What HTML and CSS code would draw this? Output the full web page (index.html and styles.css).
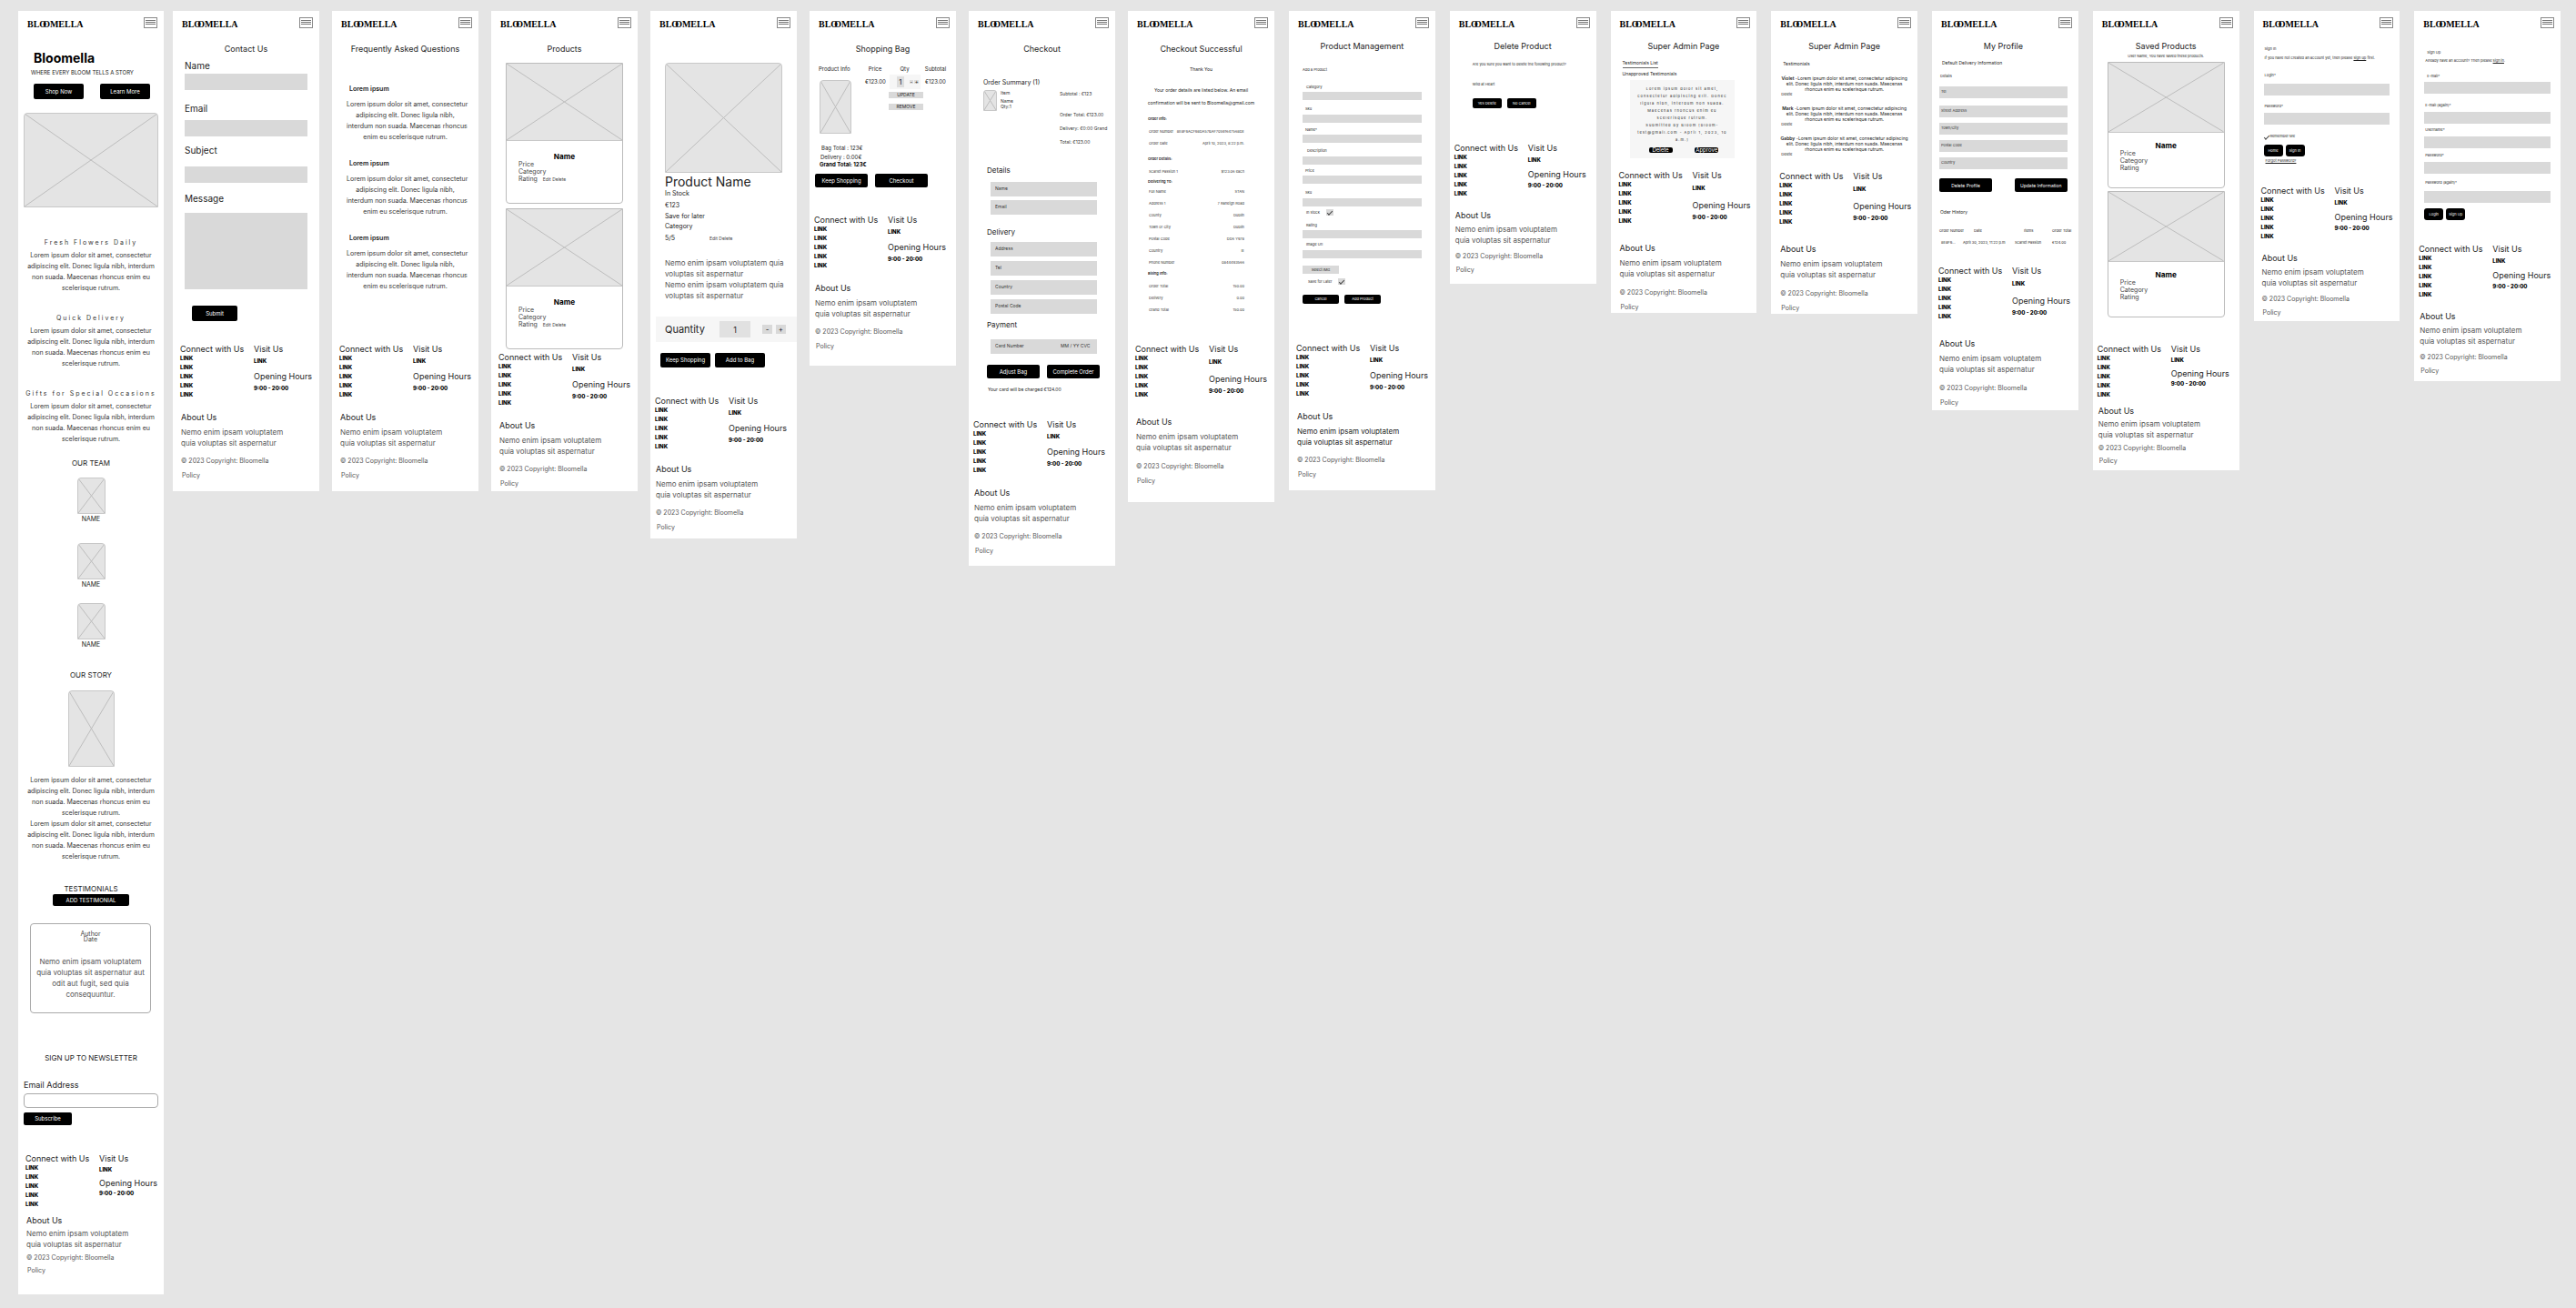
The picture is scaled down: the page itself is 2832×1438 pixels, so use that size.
FILE: index.html
```html
<!DOCTYPE html>
<html lang="en">
<head>
<meta charset="utf-8">
<meta name="viewport" content="width=device-width, initial-scale=1">
<title>Bloomella mobile wireframes</title>
<link rel="stylesheet" href="styles.css">
</head>
<body>
<svg class="defs" aria-hidden="true">
  <symbol id="menu" viewBox="0 0 13 10"><path d="M1 2.5h11M1 4.5h11M1 6.5h11" stroke="#777" stroke-width="1" fill="none"/></symbol>
  <symbol id="cross" viewBox="0 0 100 100" preserveAspectRatio="none"><path d="M0 0L100 100M100 0L0 100" stroke="#bdbdbd" stroke-width="1" vector-effect="non-scaling-stroke" fill="none"/></symbol>
</svg>

<div class="canvas">
<div class="group">

<article class="board home">
  <header class="top"><a class="logo" href="#">BLO<span>O</span>MELLA</a><button class="menu" aria-label="Menu"><svg><use href="#menu"/></svg></button></header>
  <main>
    <h1 class="brand mt-22 in-11">Bloomella</h1>
    <p class="t6 mt-4 in-8">WHERE EVERY BLOOM TELLS A STORY</p>
    <div class="btns hero-btns mt-8"><button class="btn">Shop Now</button><button class="btn">Learn More</button></div>
    <div class="ph round hero-img mt-15"><svg><use href="#cross"/></svg></div>
    <h3 class="spaced mt-34">Fresh Flowers Daily</h3>
    <p class="lorem mt-3">Lorem ipsum dolor sit amet, consectetur<br>adipiscing elit. Donec ligula nibh, interdum<br>non suada. Maecenas rhoncus enim eu<br>scelerisque rutrum.</p>
    <h3 class="spaced mt-22">Quick Delivery</h3>
    <p class="lorem mt-3">Lorem ipsum dolor sit amet, consectetur<br>adipiscing elit. Donec ligula nibh, interdum<br>non suada. Maecenas rhoncus enim eu<br>scelerisque rutrum.</p>
    <h3 class="spaced mt-22">Gifts for Special Occasions</h3>
    <p class="lorem mt-3">Lorem ipsum dolor sit amet, consectetur<br>adipiscing elit. Donec ligula nibh, interdum<br>non suada. Maecenas rhoncus enim eu<br>scelerisque rutrum.</p>
    <h2 class="t8 center mt-15">OUR TEAM</h2>
    <figure class="member mt-11"><div class="ph round"><svg><use href="#cross"/></svg></div><figcaption>NAME</figcaption></figure>
    <figure class="member mt-22"><div class="ph round"><svg><use href="#cross"/></svg></div><figcaption>NAME</figcaption></figure>
    <figure class="member mt-16"><div class="ph round"><svg><use href="#cross"/></svg></div><figcaption>NAME</figcaption></figure>
    <h2 class="t8 center mt-24">OUR STORY</h2>
    <div class="ph round story-img mt-12"><svg><use href="#cross"/></svg></div>
    <p class="lorem mt-9">Lorem ipsum dolor sit amet, consectetur<br>adipiscing elit. Donec ligula nibh, interdum<br>non suada. Maecenas rhoncus enim eu<br>scelerisque rutrum.<br>Lorem ipsum dolor sit amet, consectetur<br>adipiscing elit. Donec ligula nibh, interdum<br>non suada. Maecenas rhoncus enim eu<br>scelerisque rutrum.</p>
    <h2 class="t8 center mt-24">TESTIMONIALS</h2>
    <button class="btn add mt-1">ADD TESTIMONIAL</button>
    <blockquote class="quote mt-19"><p class="by">Author<br>Date</p><p class="copy mt-15">Nemo enim ipsam voluptatem<br>quia voluptas sit aspernatur aut<br>odit aut fugit, sed quia<br>consequuntur.</p></blockquote>
    <h2 class="t8 center mt-44">SIGN UP TO NEWSLETTER</h2>
    <label class="t9 mt-20" for="news">Email Address</label>
    <input class="outline mt-4" id="news" type="email">
    <button class="btn subscribe mt-5">Subscribe</button>
  </main>
  <footer class="foot tight">
    <div class="foot-cols">
      <div><h4>Connect with Us</h4><ul><li><a href="#">LINK</a></li><li><a href="#">LINK</a></li><li><a href="#">LINK</a></li><li><a href="#">LINK</a></li><li><a href="#">LINK</a></li></ul></div>
      <div><h4>Visit Us</h4><a class="visit" href="#">LINK</a><h4 class="opening">Opening Hours</h4><p class="hours">9:00 - 20:00</p></div>
    </div>
    <div class="about"><h4>About Us</h4><p class="copy">Nemo enim ipsam voluptatem<br>quia voluptas sit aspernatur</p><p class="legal">© 2023 Copyright: Bloomella</p><a class="policy" href="#">Policy</a></div>
  </footer>
</article>
</div>

<div class="group shop">

<article class="board contact">
  <header class="top"><a class="logo" href="#">BLO<span>O</span>MELLA</a><button class="menu" aria-label="Menu"><svg><use href="#menu"/></svg></button></header>
  <main>
    <h2 class="title mt-14">Contact Us</h2>
    <label class="t10 mt-6" for="c-name">Name</label><input class="bar h18 mt-3" id="c-name">
    <label class="t10 mt-14" for="c-mail">Email</label><input class="bar h18 mt-7" id="c-mail">
    <label class="t10 mt-9" for="c-subj">Subject</label><input class="bar h18 mt-12" id="c-subj">
    <label class="t10 mt-11" for="c-msg">Message</label><textarea class="bar mt-10" id="c-msg"></textarea>
    <button class="btn submit mt-18">Submit</button>
  </main>
  <footer class="foot">
    <div class="foot-cols">
      <div><h4>Connect with Us</h4><ul><li><a href="#">LINK</a></li><li><a href="#">LINK</a></li><li><a href="#">LINK</a></li><li><a href="#">LINK</a></li><li><a href="#">LINK</a></li></ul></div>
      <div><h4>Visit Us</h4><a class="visit" href="#">LINK</a><h4 class="opening">Opening Hours</h4><p class="hours">9:00 - 20:00</p></div>
    </div>
    <div class="about"><h4>About Us</h4><p class="copy">Nemo enim ipsam voluptatem<br>quia voluptas sit aspernatur</p><p class="legal">© 2023 Copyright: Bloomella</p><a class="policy" href="#">Policy</a></div>
  </footer>
</article>

<article class="board faq">
  <header class="top"><a class="logo" href="#">BLO<span>O</span>MELLA</a><button class="menu" aria-label="Menu"><svg><use href="#menu"/></svg></button></header>
  <main>
    <h2 class="title mt-14">Frequently Asked Questions</h2>
    <h3 class="q mt-34">Lorem ipsum</h3>
    <p class="lorem mt-7">Lorem ipsum dolor sit amet, consectetur<br>adipiscing elit. Donec ligula nibh,<br>interdum non suada. Maecenas rhoncus<br>enim eu scelerisque rutrum.</p>
    <h3 class="q mt-19">Lorem ipsum</h3>
    <p class="lorem mt-7">Lorem ipsum dolor sit amet, consectetur<br>adipiscing elit. Donec ligula nibh,<br>interdum non suada. Maecenas rhoncus<br>enim eu scelerisque rutrum.</p>
    <h3 class="q mt-19">Lorem ipsum</h3>
    <p class="lorem mt-7">Lorem ipsum dolor sit amet, consectetur<br>adipiscing elit. Donec ligula nibh,<br>interdum non suada. Maecenas rhoncus<br>enim eu scelerisque rutrum.</p>
  </main>
  <footer class="foot">
    <div class="foot-cols">
      <div><h4>Connect with Us</h4><ul><li><a href="#">LINK</a></li><li><a href="#">LINK</a></li><li><a href="#">LINK</a></li><li><a href="#">LINK</a></li><li><a href="#">LINK</a></li></ul></div>
      <div><h4>Visit Us</h4><a class="visit" href="#">LINK</a><h4 class="opening">Opening Hours</h4><p class="hours">9:00 - 20:00</p></div>
    </div>
    <div class="about"><h4>About Us</h4><p class="copy">Nemo enim ipsam voluptatem<br>quia voluptas sit aspernatur</p><p class="legal">© 2023 Copyright: Bloomella</p><a class="policy" href="#">Policy</a></div>
  </footer>
</article>

<article class="board products">
  <header class="top"><a class="logo" href="#">BLO<span>O</span>MELLA</a><button class="menu" aria-label="Menu"><svg><use href="#menu"/></svg></button></header>
  <main>
    <h2 class="title mt-14">Products</h2>
    <section class="card mt-9"><div class="ph"><svg><use href="#cross"/></svg></div><h3>Name</h3><p>Price</p><p>Category</p><p>Rating <span class="edit"><a href="#">Edit</a> <a href="#">Delete</a></span></p></section>
    <section class="card mt-5"><div class="ph"><svg><use href="#cross"/></svg></div><h3>Name</h3><p>Price</p><p>Category</p><p>Rating <span class="edit"><a href="#">Edit</a> <a href="#">Delete</a></span></p></section>
  </main>
  <footer class="foot">
    <div class="foot-cols">
      <div><h4>Connect with Us</h4><ul><li><a href="#">LINK</a></li><li><a href="#">LINK</a></li><li><a href="#">LINK</a></li><li><a href="#">LINK</a></li><li><a href="#">LINK</a></li></ul></div>
      <div><h4>Visit Us</h4><a class="visit" href="#">LINK</a><h4 class="opening">Opening Hours</h4><p class="hours">9:00 - 20:00</p></div>
    </div>
    <div class="about"><h4>About Us</h4><p class="copy">Nemo enim ipsam voluptatem<br>quia voluptas sit aspernatur</p><p class="legal">© 2023 Copyright: Bloomella</p><a class="policy" href="#">Policy</a></div>
  </footer>
</article>

<article class="board detail">
  <header class="top"><a class="logo" href="#">BLO<span>O</span>MELLA</a><button class="menu" aria-label="Menu"><svg><use href="#menu"/></svg></button></header>
  <main>
    <div class="ph round product-img mt-35"><svg><use href="#cross"/></svg></div>
    <h2 class="product-name mt-2">Product Name</h2>
    <p class="t7 mt-1">In Stock</p>
    <p class="t7 mt-5">€123</p>
    <a class="t7 mt-4" href="#">Save for later</a>
    <p class="t7 mt-3">Category</p>
    <p class="t7 rating mt-5">5/5 <span class="edit"><a href="#">Edit</a> <a href="#">Delete</a></span></p>
    <p class="copy mt-17">Nemo enim ipsam voluptatem quia<br>voluptas sit aspernatur<br>Nemo enim ipsam voluptatem quia<br>voluptas sit aspernatur</p>
    <div class="quantity"><label for="qty">Quantity</label><input id="qty" value="1"><button>-</button><button>+</button></div>
    <div class="btns detail-btns mt-12"><button class="btn">Keep Shopping</button><button class="btn">Add to Bag</button></div>
  </main>
  <footer class="foot">
    <div class="foot-cols">
      <div><h4>Connect with Us</h4><ul><li><a href="#">LINK</a></li><li><a href="#">LINK</a></li><li><a href="#">LINK</a></li><li><a href="#">LINK</a></li><li><a href="#">LINK</a></li></ul></div>
      <div><h4>Visit Us</h4><a class="visit" href="#">LINK</a><h4 class="opening">Opening Hours</h4><p class="hours">9:00 - 20:00</p></div>
    </div>
    <div class="about"><h4>About Us</h4><p class="copy">Nemo enim ipsam voluptatem<br>quia voluptas sit aspernatur</p><p class="legal">© 2023 Copyright: Bloomella</p><a class="policy" href="#">Policy</a></div>
  </footer>
</article>

<article class="board bag">
  <header class="top"><a class="logo" href="#">BLO<span>O</span>MELLA</a><button class="menu" aria-label="Menu"><svg><use href="#menu"/></svg></button></header>
  <main>
    <h2 class="title mt-14">Shopping Bag</h2>
    <table class="bag-table mt-12">
      <colgroup><col class="c-info"><col class="c-price"><col class="c-qty"><col></colgroup>
      <thead><tr><th>Product Info</th><th>Price</th><th>Qty</th><th>Subtotal</th></tr></thead>
      <tbody><tr>
        <td><div class="ph round"><svg><use href="#cross"/></svg></div></td>
        <td class="money">€123.00</td>
        <td><div class="stepper"><input value="1" aria-label="Quantity"><button>-</button><button>+</button></div><button class="chip mt-3">UPDATE</button><button class="chip mt-6">REMOVE</button></td>
        <td class="money">€123.00</td>
      </tr></tbody>
    </table>
    <p class="t6 in-3 mt-12">Bag Total : 123€</p>
    <p class="t6 in-2 mt-2">Delivery : 0:00€</p>
    <p class="t6 in-1 strong">Grand Total: 123€</p>
    <div class="btns bag-btns mt-6"><button class="btn">Keep Shopping</button><button class="btn">Checkout</button></div>
  </main>
  <footer class="foot">
    <div class="foot-cols">
      <div><h4>Connect with Us</h4><ul><li><a href="#">LINK</a></li><li><a href="#">LINK</a></li><li><a href="#">LINK</a></li><li><a href="#">LINK</a></li><li><a href="#">LINK</a></li></ul></div>
      <div><h4>Visit Us</h4><a class="visit" href="#">LINK</a><h4 class="opening">Opening Hours</h4><p class="hours">9:00 - 20:00</p></div>
    </div>
    <div class="about"><h4>About Us</h4><p class="copy">Nemo enim ipsam voluptatem<br>quia voluptas sit aspernatur</p><p class="legal">© 2023 Copyright: Bloomella</p><a class="policy" href="#">Policy</a></div>
  </footer>
</article>

<article class="board checkout">
  <header class="top"><a class="logo" href="#">BLO<span>O</span>MELLA</a><button class="menu" aria-label="Menu"><svg><use href="#menu"/></svg></button></header>
  <main>
    <h2 class="title mt-14">Checkout</h2>
    <h3 class="t7 mt-27">Order Summary (1)</h3>
    <div class="summary mt-4">
      <div class="ph round"><svg><use href="#cross"/></svg></div>
      <div class="item"><p>Item</p><p class="mt-3">Name</p><p>Qty:1</p></div>
      <div class="totals"><p>Subtotal : €123</p><p class="mt-17">Order Total: €123.00</p><p class="mt-9">Delivery: €0:00 Grand</p><p class="mt-9">Total: €123.00</p></div>
    </div>
    <h3 class="t8 in-4 mt-23">Details</h3>
    <input class="bar h16 mt-8" placeholder="Name" aria-label="Name"><input class="bar h16 mt-4" placeholder="Email" aria-label="Email">
    <h3 class="t8 in-4 mt-14">Delivery</h3>
    <input class="bar h16 mt-6" placeholder="Address" aria-label="Address"><input class="bar h16 mt-5" placeholder="Tel" aria-label="Tel"><input class="bar h16 mt-5" placeholder="Country" aria-label="Country"><input class="bar h16 mt-5" placeholder="Postal Code" aria-label="Postal Code">
    <h3 class="t8 in-4 mt-7">Payment</h3>
    <div class="paybox mt-11"><input placeholder="Card Number" aria-label="Card Number"><input placeholder="MM / YY CVC" aria-label="Expiry and CVC"></div>
    <div class="btns checkout-btns in-4 mt-12"><button class="btn">Adjust Bag</button><button class="btn">Complete Order</button></div>
    <p class="t5 in-5 mt-9">Your card will be charged €124.00</p>
  </main>
  <footer class="foot">
    <div class="foot-cols">
      <div><h4>Connect with Us</h4><ul><li><a href="#">LINK</a></li><li><a href="#">LINK</a></li><li><a href="#">LINK</a></li><li><a href="#">LINK</a></li><li><a href="#">LINK</a></li></ul></div>
      <div><h4>Visit Us</h4><a class="visit" href="#">LINK</a><h4 class="opening">Opening Hours</h4><p class="hours">9:00 - 20:00</p></div>
    </div>
    <div class="about"><h4>About Us</h4><p class="copy">Nemo enim ipsam voluptatem<br>quia voluptas sit aspernatur</p><p class="legal">© 2023 Copyright: Bloomella</p><a class="policy" href="#">Policy</a></div>
  </footer>
</article>

<article class="board success">
  <header class="top"><a class="logo" href="#">BLO<span>O</span>MELLA</a><button class="menu" aria-label="Menu"><svg><use href="#menu"/></svg></button></header>
  <main>
    <h2 class="title mt-14">Checkout Successful</h2>
    <p class="t5 center mt-13">Thank You</p>
    <p class="note mt-13">Your order details are listed below. An email<br>confirmation will be sent to Bloomella@gmail.com</p>
    <h3 class="sub mt-8">Order Info:</h3>
    <table class="facts mt-4">
      <tr><th>Order Number</th><td class="long">8E8F9ACF98DA57BAF70591647568DE</td></tr>
      <tr><th>Order Date</th><td>April 10, 2023, 8:22 p.m.</td></tr>
    </table>
    <h3 class="sub mt-8">Order Details:</h3>
    <table class="facts mt-4"><tr><th>Scarlet Passion 1</th><td>$123.06 each</td></tr></table>
    <h3 class="sub mt-2">Delivering To:</h3>
    <table class="facts mt-1">
      <tr><th>Full Name</th><td>STAN</td></tr>
      <tr><th>Address 1</th><td>7 Raneigh Road</td></tr>
      <tr><th>County</th><td>Dublin</td></tr>
      <tr><th>Town or City</th><td>Dublin</td></tr>
      <tr><th>Postal Code</th><td>DD6 Y978</td></tr>
      <tr><th>Country</th><td>IE</td></tr>
      <tr><th>Phone Number</th><td>0844493566</td></tr>
    </table>
    <h3 class="sub mt-3">Billing Info:</h3>
    <table class="facts mt-4">
      <tr><th>Order Total</th><td>150.00</td></tr>
      <tr><th>Delivery</th><td>0.00</td></tr>
      <tr><th>Grand Total</th><td>150.00</td></tr>
    </table>
  </main>
  <footer class="foot loose">
    <div class="foot-cols">
      <div><h4>Connect with Us</h4><ul><li><a href="#">LINK</a></li><li><a href="#">LINK</a></li><li><a href="#">LINK</a></li><li><a href="#">LINK</a></li><li><a href="#">LINK</a></li></ul></div>
      <div><h4>Visit Us</h4><a class="visit" href="#">LINK</a><h4 class="opening">Opening Hours</h4><p class="hours">9:00 - 20:00</p></div>
    </div>
    <div class="about"><h4>About Us</h4><p class="copy">Nemo enim ipsam voluptatem<br>quia voluptas sit aspernatur</p><p class="legal">© 2023 Copyright: Bloomella</p><a class="policy" href="#">Policy</a></div>
  </footer>
</article>
</div>

<div class="group account">

<article class="board manage">
  <header class="top"><a class="logo" href="#">BLO<span>O</span>MELLA</a><button class="menu" aria-label="Menu"><svg><use href="#menu"/></svg></button></header>
  <main>
    <h2 class="title mt-11">Product Management</h2>
    <h3 class="t4 mt-17">Add a Product</h3>
    <label class="t4 in-4 mt-13" for="m1">Category</label><input class="bar h9 mt-2" id="m1">
    <label class="t4 in-3 mt-7" for="m2">Sku</label><input class="bar h9 mt-3" id="m2">
    <label class="t4 in-3 mt-5" for="m3">Name*</label><input class="bar h9 mt-2" id="m3">
    <label class="t4 in-5 mt-6" for="m4">Description</label><input class="bar h9 mt-3" id="m4">
    <label class="t4 in-3 mt-4" for="m5">Price</label><input class="bar h9 mt-2" id="m5">
    <label class="t4 in-3 mt-7" for="m6">Sku</label><input class="bar h9 mt-3" id="m6">
    <label class="check in-4 mt-3">In stock <input type="checkbox" checked></label>
    <label class="t4 in-4 mt-8" for="m7">Rating</label><input class="bar h9 mt-2" id="m7">
    <label class="t4 in-4 mt-4" for="m8">Image Url</label><input class="bar h9 mt-3" id="m8">
    <button class="chip select mt-8">Select IMG</button>
    <label class="check in-6 mt-5">Save for Later <input type="checkbox" checked></label>
    <div class="btns manage-btns mt-11"><button class="btn">Cancel</button><button class="btn">Add Product</button></div>
  </main>
  <footer class="foot">
    <div class="foot-cols">
      <div><h4>Connect with Us</h4><ul><li><a href="#">LINK</a></li><li><a href="#">LINK</a></li><li><a href="#">LINK</a></li><li><a href="#">LINK</a></li><li><a href="#">LINK</a></li></ul></div>
      <div><h4>Visit Us</h4><a class="visit" href="#">LINK</a><h4 class="opening">Opening Hours</h4><p class="hours">9:00 - 20:00</p></div>
    </div>
    <div class="about"><h4>About Us</h4><p class="copy">Nemo enim ipsam voluptatem<br>quia voluptas sit aspernatur</p><p class="legal">© 2023 Copyright: Bloomella</p><a class="policy" href="#">Policy</a></div>
  </footer>
</article>

<article class="board delete">
  <header class="top"><a class="logo" href="#">BLO<span>O</span>MELLA</a><button class="menu" aria-label="Menu"><svg><use href="#menu"/></svg></button></header>
  <main>
    <h2 class="title mt-11">Delete Product</h2>
    <p class="t4 mt-11">Are you sure you want to delete the following product?</p>
    <p class="t4 mt-16">Wild at Heart</p>
    <div class="btns delete-btns mt-12"><button class="btn">Yes Delete</button><button class="btn">No Cancel</button></div>
  </main>
  <footer class="foot mid">
    <div class="foot-cols">
      <div><h4>Connect with Us</h4><ul><li><a href="#">LINK</a></li><li><a href="#">LINK</a></li><li><a href="#">LINK</a></li><li><a href="#">LINK</a></li><li><a href="#">LINK</a></li></ul></div>
      <div><h4>Visit Us</h4><a class="visit" href="#">LINK</a><h4 class="opening">Opening Hours</h4><p class="hours">9:00 - 20:00</p></div>
    </div>
    <div class="about"><h4>About Us</h4><p class="copy">Nemo enim ipsam voluptatem<br>quia voluptas sit aspernatur</p><p class="legal">© 2023 Copyright: Bloomella</p><a class="policy" href="#">Policy</a></div>
  </footer>
</article>

<article class="board admin">
  <header class="top"><a class="logo" href="#">BLO<span>O</span>MELLA</a><button class="menu" aria-label="Menu"><svg><use href="#menu"/></svg></button></header>
  <main>
    <h2 class="title mt-11">Super Admin Page</h2>
    <a class="t5 tab mt-9" href="#">Testimonials List</a>
    <p class="t5 mt-3">Unapproved Testimonials</p>
    <section class="pending">
      <p>Lorem ipsum dolor sit amet,<br>consectetur adipiscing elit. Donec<br>ligula nibh, interdum non suada.<br>Maecenas rhoncus enim eu<br>scelerisque rutrum.<br>Submitted by Bloom [bloom-<br>test@gmail.com - April 1, 2023, 10<br>a.m.]</p>
      <div class="btns mt-4"><button class="btn">Delete</button><button class="btn">Approve</button></div>
    </section>
  </main>
  <footer class="foot loose">
    <div class="foot-cols">
      <div><h4>Connect with Us</h4><ul><li><a href="#">LINK</a></li><li><a href="#">LINK</a></li><li><a href="#">LINK</a></li><li><a href="#">LINK</a></li><li><a href="#">LINK</a></li></ul></div>
      <div><h4>Visit Us</h4><a class="visit" href="#">LINK</a><h4 class="opening">Opening Hours</h4><p class="hours">9:00 - 20:00</p></div>
    </div>
    <div class="about"><h4>About Us</h4><p class="copy">Nemo enim ipsam voluptatem<br>quia voluptas sit aspernatur</p><p class="legal">© 2023 Copyright: Bloomella</p><a class="policy" href="#">Policy</a></div>
  </footer>
</article>

<article class="board reviews">
  <header class="top"><a class="logo" href="#">BLO<span>O</span>MELLA</a><button class="menu" aria-label="Menu"><svg><use href="#menu"/></svg></button></header>
  <main>
    <h2 class="title mt-11">Super Admin Page</h2>
    <h3 class="t5 in-3 mt-10">Testimonials</h3>
    <p class="review mt-10"><b>Violet</b> -Lorem ipsum dolor sit amet, consectetur adipiscing<br>elit. Donec ligula nibh, interdum non suada. Maecenas<br>rhoncus enim eu scelerisque rutrum.</p><a class="t4 in-1" href="#">Delete</a>
    <p class="review mt-9"><b>Mark</b> -Lorem ipsum dolor sit amet, consectetur adipiscing<br>elit. Donec ligula nibh, interdum non suada. Maecenas<br>rhoncus enim eu scelerisque rutrum.</p><a class="t4 in-1" href="#">Delete</a>
    <p class="review mt-9"><b>Gabby</b> -Lorem ipsum dolor sit amet, consectetur adipiscing<br>elit. Donec ligula nibh, interdum non suada. Maecenas<br>rhoncus enim eu scelerisque rutrum.</p><a class="t4 in-1" href="#">Delete</a>
  </main>
  <footer class="foot loose">
    <div class="foot-cols">
      <div><h4>Connect with Us</h4><ul><li><a href="#">LINK</a></li><li><a href="#">LINK</a></li><li><a href="#">LINK</a></li><li><a href="#">LINK</a></li><li><a href="#">LINK</a></li></ul></div>
      <div><h4>Visit Us</h4><a class="visit" href="#">LINK</a><h4 class="opening">Opening Hours</h4><p class="hours">9:00 - 20:00</p></div>
    </div>
    <div class="about"><h4>About Us</h4><p class="copy">Nemo enim ipsam voluptatem<br>quia voluptas sit aspernatur</p><p class="legal">© 2023 Copyright: Bloomella</p><a class="policy" href="#">Policy</a></div>
  </footer>
</article>

<article class="board profile">
  <header class="top"><a class="logo" href="#">BLO<span>O</span>MELLA</a><button class="menu" aria-label="Menu"><svg><use href="#menu"/></svg></button></header>
  <main>
    <h2 class="title mt-11">My Profile</h2>
    <h3 class="t5 in-3 mt-9">Default Delivery Information</h3>
    <p class="t4 in-1 mt-9">Details</p>
    <input class="bar h13 mt-8" placeholder="Tel" aria-label="Tel"><input class="bar h13 mt-8" placeholder="Street Address" aria-label="Street Address"><input class="bar h13 mt-6" placeholder="Town/City" aria-label="Town/City"><input class="bar h13 mt-6" placeholder="Postal Code" aria-label="Postal Code"><input class="bar h13 mt-6" placeholder="Country" aria-label="Country">
    <div class="btns profile-btns mt-10"><button class="btn">Delete Profile</button><button class="btn">Update Information</button></div>
    <h3 class="t5 in-1 mt-19">Oder History</h3>
    <table class="history mt-15">
      <colgroup><col class="c-num"><col class="c-date"><col class="c-items"><col></colgroup>
      <thead><tr><th>Order Number</th><th class="date">Date</th><th>Items</th><th>Order Total</th></tr></thead>
      <tbody><tr><td>8E8F9...</td><td>April 30, 2023, 11:22 p.m</td><td>Scarlet Passion</td><td>€124.00</td></tr></tbody>
    </table>
  </main>
  <footer class="foot loose">
    <div class="foot-cols">
      <div><h4>Connect with Us</h4><ul><li><a href="#">LINK</a></li><li><a href="#">LINK</a></li><li><a href="#">LINK</a></li><li><a href="#">LINK</a></li><li><a href="#">LINK</a></li></ul></div>
      <div><h4>Visit Us</h4><a class="visit" href="#">LINK</a><h4 class="opening">Opening Hours</h4><p class="hours">9:00 - 20:00</p></div>
    </div>
    <div class="about"><h4>About Us</h4><p class="copy">Nemo enim ipsam voluptatem<br>quia voluptas sit aspernatur</p><p class="legal">© 2023 Copyright: Bloomella</p><a class="policy" href="#">Policy</a></div>
  </footer>
</article>

<article class="board saved">
  <header class="top"><a class="logo" href="#">BLO<span>O</span>MELLA</a><button class="menu" aria-label="Menu"><svg><use href="#menu"/></svg></button></header>
  <main>
    <h2 class="title mt-11">Saved Products</h2>
    <p class="t4 center mt-2">User Name, You have saved these products.</p>
    <section class="card mt-3"><div class="ph"><svg><use href="#cross"/></svg></div><h3>Name</h3><p>Price</p><p>Category</p><p>Rating</p></section>
    <section class="card mt-3"><div class="ph"><svg><use href="#cross"/></svg></div><h3>Name</h3><p>Price</p><p>Category</p><p>Rating</p></section>
  </main>
  <footer class="foot tight">
    <div class="foot-cols">
      <div><h4>Connect with Us</h4><ul><li><a href="#">LINK</a></li><li><a href="#">LINK</a></li><li><a href="#">LINK</a></li><li><a href="#">LINK</a></li><li><a href="#">LINK</a></li></ul></div>
      <div><h4>Visit Us</h4><a class="visit" href="#">LINK</a><h4 class="opening">Opening Hours</h4><p class="hours">9:00 - 20:00</p></div>
    </div>
    <div class="about"><h4>About Us</h4><p class="copy">Nemo enim ipsam voluptatem<br>quia voluptas sit aspernatur</p><p class="legal">© 2023 Copyright: Bloomella</p><a class="policy" href="#">Policy</a></div>
  </footer>
</article>

<article class="board signin">
  <header class="top"><a class="logo" href="#">BLO<span>O</span>MELLA</a><button class="menu" aria-label="Menu"><svg><use href="#menu"/></svg></button></header>
  <main>
    <h2 class="t4 in-1 mt-17">Sign In</h2>
    <p class="t4 in-1 mt-4">If you have not created an account yet, then please <a class="u" href="#">sign up</a> first.</p>
    <label class="t4 in-1 mt-13" for="s1">Login*</label><input class="bar h13 mt-6" id="s1">
    <label class="t4 in-1 mt-9" for="s2">Password*</label><input class="bar h13 mt-4" id="s2" type="password">
    <label class="check plain mt-10"><input type="checkbox" checked> Remember Me</label>
    <div class="btns sign-btns mt-6"><button class="btn">Home</button><button class="btn">Sign In</button></div>
    <a class="t4 u in-2 mt-2" href="#">Forgot Password?</a>
  </main>
  <footer class="foot mid">
    <div class="foot-cols">
      <div><h4>Connect with Us</h4><ul><li><a href="#">LINK</a></li><li><a href="#">LINK</a></li><li><a href="#">LINK</a></li><li><a href="#">LINK</a></li><li><a href="#">LINK</a></li></ul></div>
      <div><h4>Visit Us</h4><a class="visit" href="#">LINK</a><h4 class="opening">Opening Hours</h4><p class="hours">9:00 - 20:00</p></div>
    </div>
    <div class="about"><h4>About Us</h4><p class="copy">Nemo enim ipsam voluptatem<br>quia voluptas sit aspernatur</p><p class="legal">© 2023 Copyright: Bloomella</p><a class="policy" href="#">Policy</a></div>
  </footer>
</article>

<article class="board signup">
  <header class="top"><a class="logo" href="#">BLO<span>O</span>MELLA</a><button class="menu" aria-label="Menu"><svg><use href="#menu"/></svg></button></header>
  <main>
    <h2 class="t4 in-3 mt-21">Sign Up</h2>
    <p class="t4 in-1 mt-3">Already have an account? Then please <a class="u" href="#">sign in</a>.</p>
    <label class="t4 in-3 mt-11" for="u1">E-mail*</label><input class="bar h13 mt-3" id="u1">
    <label class="t4 in-1 mt-10" for="u2">E-mail (again)*</label><input class="bar h13 mt-4" id="u2">
    <label class="t4 in-1 mt-4" for="u3">Username*</label><input class="bar h13 mt-4" id="u3">
    <label class="t4 in-1 mt-5" for="u4">Password*</label><input class="bar h13 mt-4" id="u4" type="password">
    <label class="t4 in-1 mt-7" for="u5">Password (again)*</label><input class="bar h13 mt-6" id="u5" type="password">
    <div class="btns sign-btns mt-6"><button class="btn">Login</button><button class="btn">Sign Up</button></div>
  </main>
  <footer class="foot mid">
    <div class="foot-cols">
      <div><h4>Connect with Us</h4><ul><li><a href="#">LINK</a></li><li><a href="#">LINK</a></li><li><a href="#">LINK</a></li><li><a href="#">LINK</a></li><li><a href="#">LINK</a></li></ul></div>
      <div><h4>Visit Us</h4><a class="visit" href="#">LINK</a><h4 class="opening">Opening Hours</h4><p class="hours">9:00 - 20:00</p></div>
    </div>
    <div class="about"><h4>About Us</h4><p class="copy">Nemo enim ipsam voluptatem<br>quia voluptas sit aspernatur</p><p class="legal">© 2023 Copyright: Bloomella</p><a class="policy" href="#">Policy</a></div>
  </footer>
</article>
</div>
</div>
</body>
</html>
```
FILE: styles.css
```css
* { box-sizing: border-box; margin: 0; padding: 0; }
body { background: #e5e5e5; color: #222; font-family: Inter, "Liberation Sans", sans-serif; }
h1, h2, h3, h4, th { font-weight: 400; }
button, input, textarea { font: inherit; color: inherit; border: 0; border-radius: 0; outline: 0; min-width: 0; }
textarea { resize: none; }
a { color: inherit; text-decoration: none; }
ul { list-style: none; }
.defs { display: none; }

/* Canvas: three runs of boards side by side */
.canvas { display: grid; grid-template-columns: 160fr 1211fr 1404fr; column-gap: 10px; padding: 12px 17px 14px 20px; align-items: start; }
.group { display: grid; grid-auto-flow: column; grid-auto-columns: minmax(0, 1fr); align-items: start; }
.shop { column-gap: 14px; }
.account { column-gap: 16px; margin-left: 6px; }

.board { --side: 8px; --pad: 16px; --foot-gap: 30px; --foot-end: 12px; background: #fff; white-space: nowrap; }
.board main { display: flex; flex-direction: column; align-items: stretch; padding: 0 var(--pad); }
main > a, main > label { align-self: flex-start; }

/* Board header */
.top { display: flex; justify-content: space-between; align-items: flex-start; padding: 7px 7px 3px 10px; }
.logo { font: 700 10px/12px "Liberation Serif", serif; color: #000; padding-top: 2px; height: 12px; }
.logo span { margin-left: -4px; }
.menu { width: 15px; height: 12px; border: 1px solid #888; background: #fff; display: flex; }
.menu svg { width: 13px; height: 10px; }

/* Text sizes */
.title { font-size: 9px; line-height: 12px; text-align: center; }
.t4 { font-size: 4px; line-height: 6px; }
.t5 { font-size: 5px; line-height: 6px; }
.t6 { font-size: 6px; line-height: 8px; }
.t7 { font-size: 7px; line-height: 8px; }
.t8 { font-size: 8px; line-height: 10px; }
.t9 { font-size: 9px; line-height: 10px; }
.t10 { font-size: 10px; line-height: 12px; }
.center { text-align: center; }
.strong { font-weight: 700; color: #000; }
.u { text-decoration: underline; text-decoration-thickness: 1px; }
.copy { font-size: 8px; line-height: 12px; color: #555; }
.lorem { font-size: 7px; line-height: 12px; text-align: center; color: #333; }
.spaced { font-size: 7px; line-height: 10px; letter-spacing: 2px; text-align: center; color: #333; }
.edit { font-size: 5px; color: #444; }

/* Vertical rhythm */
.mt-1 { margin-top: 1px; } .mt-2 { margin-top: 2px; } .mt-3 { margin-top: 3px; } .mt-4 { margin-top: 4px; }
.mt-5 { margin-top: 5px; } .mt-6 { margin-top: 6px; } .mt-7 { margin-top: 7px; } .mt-8 { margin-top: 8px; }
.mt-9 { margin-top: 9px; } .mt-10 { margin-top: 10px; } .mt-11 { margin-top: 11px; } .mt-12 { margin-top: 12px; }
.mt-13 { margin-top: 13px; } .mt-14 { margin-top: 14px; } .mt-15 { margin-top: 15px; } .mt-16 { margin-top: 16px; }
.mt-17 { margin-top: 17px; } .mt-18 { margin-top: 18px; } .mt-19 { margin-top: 19px; } .mt-20 { margin-top: 20px; }
.mt-21 { margin-top: 21px; } .mt-22 { margin-top: 22px; } .mt-23 { margin-top: 23px; } .mt-24 { margin-top: 24px; }
.mt-27 { margin-top: 27px; } .mt-34 { margin-top: 34px; } .mt-35 { margin-top: 35px; } .mt-44 { margin-top: 44px; }
.in-1 { margin-left: 1px; } .in-2 { margin-left: 2px; } .in-3 { margin-left: 3px; } .in-4 { margin-left: 4px; }
.in-5 { margin-left: 5px; } .in-6 { margin-left: 6px; } .in-8 { margin-left: 8px; } .in-11 { margin-left: 11px; }

/* Controls */
.btn { display: flex; align-items: center; justify-content: center; background: #000; color: #fff; border-radius: 2px; font-size: 6px; line-height: 8px; height: 16px; }
.btns { display: flex; }
.bar { display: block; width: 100%; background: #d9d9d9; padding: 0 2px 2px; font-size: 4px; }
.bar::placeholder, .paybox input::placeholder { color: #333; opacity: 1; }
.h9 { height: 9px; } .h13 { height: 13px; } .h16 { height: 16px; } .h18 { height: 18px; }
.chip { display: block; background: #d9d9d9; font-size: 5px; line-height: 7px; height: 7px; text-align: center; }
.check { display: flex; align-items: center; gap: 7px; font-size: 4px; line-height: 7px; }
.check input { appearance: none; width: 8px; height: 7px; background: #d9d9d9; display: grid; place-items: center; }
.check input:checked::before { content: ""; width: 5px; height: 2px; border: solid #444; border-width: 0 0 1px 1px; rotate: -45deg; }
.check.plain { gap: 3px; line-height: 6px; }
.check.plain input { width: 4px; height: 6px; background: none; }

/* Picture placeholder */
.ph { background: #e4e4e4; border: 1px solid #c8c8c8; overflow: hidden; display: flex; }
.ph svg { width: 100%; height: 100%; }
.ph.round { border-radius: 4px 4px 0 0; }

/* Product card */
.card { --art: 85px; --lead: 12px; border: 1px solid #bbb; border-radius: 0 0 4px 4px; height: 155px; font-size: 7px; line-height: 8px; color: #444; }
.card .ph { height: var(--art); border-width: 0 0 1px; }
.card h3 { margin-top: var(--lead); line-height: 10px; font-weight: 700; text-align: center; color: #000; }
.card p { padding-left: 13px; }
.card .edit { margin-left: 4px; }

/* Footer */
.foot { --a: 4px; --b: 8px; --c: 4px; --d: 15px; --e: 5px; --f: 10px; --g: 8px; padding: var(--foot-gap) 0 var(--foot-end) var(--side); }
.foot.tight { --a: 3px; --b: 6px; --c: 2px; --d: 8px; --e: 3px; --f: 5px; --g: 6px; }
.foot.mid { --b: 7px; --c: 3px; --d: 14px; --e: 4px; --f: 8px; --g: 7px; }
.foot.loose { --a: 5px; --b: 10px; --d: 20px; --f: 11px; }
.foot-cols { display: grid; grid-template-columns: 81px 1fr; }
.foot h4 { font-size: 9px; line-height: 10px; }
.foot li, .visit, .hours { font-size: 6px; font-weight: 800; line-height: 10px; color: #000; }
.foot .visit, .hours { display: block; line-height: 8px; }
.visit { margin-top: var(--a); }
.foot .opening { margin-top: var(--b); }
.hours { margin-top: var(--c); }
.about { padding-left: 1px; margin-top: var(--d); }
.about .copy { margin-top: var(--e); }
.legal, .policy { display: block; font-size: 6px; line-height: 8px; color: #444; }
.legal { margin-top: var(--f); }
.policy { margin: var(--g) 0 0 1px; }
.legal, .policy { font-size: 7px; color: #555; }

/* Home */
.home { --pad: 6px; --foot-gap: 32px; --foot-end: 22px; }
.brand { font-size: 14px; line-height: 16px; font-weight: 700; color: #000; }
.hero-btns { justify-content: space-between; padding: 0 9px 0 11px; }
.hero-btns .btn { width: 55px; height: 17px; }
.hero-img { height: 104px; }
.member { width: 31px; align-self: center; text-align: center; font-size: 7px; line-height: 8px; }
.member .ph { height: 40px; margin-bottom: 2px; }
.story-img { width: 51px; height: 84px; align-self: center; }
.home .add { width: 84px; height: 13px; align-self: center; }
.quote { border: 1px solid #aaa; border-radius: 4px; margin-inline: 7px 8px; padding: 8px 0 14px; text-align: center; }
.quote .by { font-size: 7px; line-height: 6px; color: #444; }
.outline { height: 16px; border: 1px solid #aaa; border-radius: 4px; }
.subscribe { width: 53px; height: 14px; }

/* Contact */
.contact { --pad: 13px; --foot-gap: 26px; --foot-end: 13px; }
.contact textarea { height: 84px; }
.submit { width: 50px; height: 17px; margin-left: 8px; }

/* FAQ */
.faq { --foot-gap: 58px; --foot-end: 13px; }
.faq .q { font-size: 7px; line-height: 8px; font-weight: 600; margin-left: 3px; }

/* Products */
.products { --foot-gap: 4px; --foot-end: 4px; }

/* Product detail */
.detail { --side: 5px; --foot-gap: 32px; --foot-end: 8px; }
.product-img { height: 121px; }
.product-name { font-size: 14px; line-height: 16px; }
.rating { display: grid; grid-template-columns: 49px 1fr; }
.quantity { display: flex; align-items: center; gap: 4px; height: 28px; background: #f6f6f6; margin: 17px -16px 0 -10px; padding: 0 12px 0 10px; font-size: 11px; }
.quantity label { flex: 1; }
.quantity input { width: 34px; height: 18px; background: #e1e1e1; text-align: center; font-size: 9px; margin-right: 9px; }
.quantity button { width: 11px; height: 10px; background: #d9d9d9; font-size: 8px; line-height: 8px; }
.detail-btns { gap: 5px; margin-left: -5px; }
.detail-btns .btn { width: 55px; }

/* Bag */
.bag { --pad: 10px; --side: 5px; --foot-gap: 31px; --foot-end: 17px; }
.bag-table { width: 100%; table-layout: fixed; border-spacing: 0; font-size: 6px; line-height: 8px; }
.c-info { width: 51px; } .c-price { width: 22px; } .c-qty { width: 43px; }
.bag-table th:first-child { text-align: left; }
.bag-table td { vertical-align: top; padding-top: 2px; }
.bag-table .money { padding-top: 6px; text-align: center; }
.bag-table .ph { width: 35px; height: 59px; margin: 6px 0 0 1px; }
.stepper { display: flex; align-items: center; gap: 1px; height: 16px; margin: 0 4px 0 5px; padding: 0 2px 0 8px; background: #f6f6f6; }
.stepper input { width: 8px; height: 12px; margin-right: 5px; background: #dedede; text-align: center; font-size: 8px; }
.stepper button { width: 5px; height: 4px; background: #dedede; font-size: 6px; line-height: 4px; }
.bag-table .chip { width: 38px; margin-left: 4px; }
.bag-btns { gap: 8px; margin-left: -4px; }
.bag-btns .btn { width: 58px; height: 15px; }

/* Checkout */
.checkout { --side: 5px; --foot-gap: 31px; }
.summary { display: grid; grid-template-columns: 15px 61px 1fr; column-gap: 4px; align-items: start; height: 60px; font-size: 5px; line-height: 6px; color: #333; }
.summary .ph { height: 23px; }
.summary .ph.round { border-radius: 3px 3px 0 0; }
.totals { padding-top: 1px; }
.checkout .bar, .paybox { width: auto; margin-left: 8px; margin-right: 4px; padding-left: 5px; font-size: 5px; }
.paybox { display: flex; justify-content: space-between; height: 16px; background: #d9d9d9; }
.paybox input { background: none; width: 40px; padding-bottom: 2px; }
.checkout-btns { gap: 8px; }
.checkout-btns .btn { width: 58px; height: 15px; }

/* Checkout success */
.success { --pad: 22px; --foot-gap: 32px; --foot-end: 19px; }
.success .title, .success .center, .note { margin-inline: -10px; }
.note { font-size: 5px; line-height: 14px; text-align: center; }
.sub { font-size: 4px; line-height: 6px; font-weight: 600; }
.facts { width: 106px; border-spacing: 0; font-size: 4px; line-height: 13px; color: #333; }
.facts th { text-align: left; padding-left: 1px; }
.facts td { text-align: right; }

/* Product management */
.manage { --side: 8px; --pad: 15px; --foot-gap: 44px; --foot-end: 13px; }
.manage .about .copy { color: #222; }
.select { width: 40px; height: 9px; font-size: 4px; line-height: 9px; }
.manage-btns { gap: 6px; }
.manage-btns .btn { width: 40px; height: 10px; font-size: 4px; }

/* Delete product */
.delete { --side: 5px; --pad: 25px; --foot-gap: 39px; --foot-end: 11px; }
.delete-btns { gap: 6px; }
.delete-btns .btn { width: 32px; height: 11px; font-size: 4px; }

/* Admin: pending testimonials */
.admin { --side: 9px; --pad: 13px; --foot-gap: 14px; --foot-end: 2px; }
.tab { padding-bottom: 2px; border-bottom: 1px solid #666; }
.pending { background: #f6f6f6; margin: 4px 11px 0 8px; padding: 6px 0; text-align: center; }
.pending p { font-size: 4px; line-height: 8px; letter-spacing: 1px; }
.pending .btns { justify-content: space-between; padding: 0 18px 0 21px; }
.pending .btn { width: 26px; height: 6px; line-height: 6px; }

/* Admin: testimonials list */
.reviews { --side: 9px; --pad: 10px; --foot-gap: 16px; --foot-end: 2px; }
.review { font-size: 5px; line-height: 6px; text-align: center; }
.review b { font-weight: 600; }

/* Profile */
.profile { --side: 7px; --pad: 8px; --foot-gap: 23px; --foot-end: 4px; }
.profile main { padding-right: 12px; }
.profile-btns { justify-content: space-between; }
.profile-btns .btn { width: 58px; height: 15px; font-size: 5px; }
.history { width: 100%; table-layout: fixed; border-spacing: 0; font-size: 4px; line-height: 6px; }
.history th, .history td { text-align: left; }
.history td { padding-top: 7px; }
.history td:first-child { padding-left: 2px; }
.history .date { padding-left: 12px; }
.c-num { width: 26px; } .c-date { width: 57px; } .c-items { width: 41px; }
.history th:nth-child(3) { padding-left: 10px; }

/* Saved products */
.saved { --side: 5px; --foot-gap: 30px; --foot-end: 6px; }
.saved .card { --art: 77px; --lead: 9px; height: 139px; }

/* Sign in and sign up */
.signin { --pad: 11px; --foot-gap: 25px; --foot-end: 5px; }
.signup { --pad: 11px; --side: 5px; --foot-gap: 27px; --foot-end: 7px; }
.sign-btns { gap: 3px; }
.sign-btns .btn { width: 21px; height: 13px; font-size: 4px; border-radius: 3px; }
```
